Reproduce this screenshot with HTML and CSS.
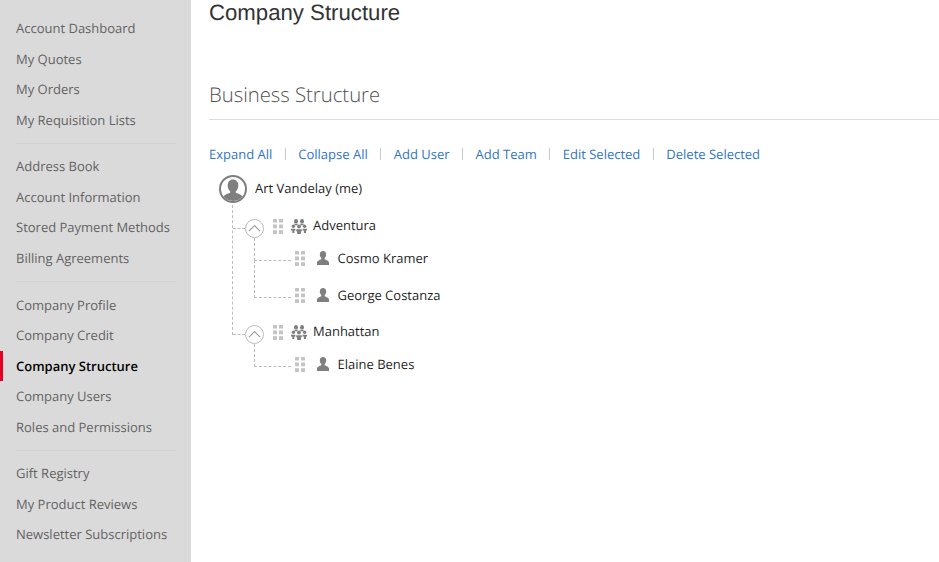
FILE: index.html
```html
<!DOCTYPE html>
<html lang="en">
<head>
<meta charset="utf-8">
<title>Company Structure</title>
<link rel="stylesheet" href="styles.css">
</head>
<body>
<svg class="defs" width="0" height="0" aria-hidden="true">
  <symbol id="grip" viewBox="0 0 10 15"><g fill="#c4c4c4"><rect x="0" y="0" width="4" height="3.500"/><rect x="6" y="0" width="4" height="3.500"/><rect x="0" y="5.500" width="4" height="3.800"/><rect x="6" y="5.500" width="4" height="3.800"/><rect x="0" y="11.200" width="4" height="3.800"/><rect x="6" y="11.200" width="4" height="3.800"/></g></symbol>
  <symbol id="user" viewBox="0 0 14 14"><path fill="#7f7f7f" d="M7 0C5 0 3.800 1.500 3.800 3.500c0 1.500.6 2.700 1.500 3.400v1.300C3.700 9 1 9.600 1 11.600V14h12v-2.400c0-2-2.700-2.600-4.300-3.400V6.900c.9-.7 1.500-1.900 1.500-3.400C10.200 1.500 9 0 7 0z"/></symbol>
  <symbol id="team" viewBox="0 0 16 15"><g fill="#7f7f7f"><ellipse cx="5" cy="2.200" rx="2" ry="2.200"/><ellipse cx="11" cy="2.200" rx="2" ry="2.200"/><path d="M3 4.800h4.100l-.9 1.500H3.900z"/><path d="M8.900 4.800H13l-.9 1.500H9.800z"/><ellipse cx="2.400" cy="7.300" rx="1.700" ry="1.700"/><ellipse cx="13.600" cy="7.300" rx="1.700" ry="1.700"/><ellipse cx="8" cy="7.600" rx="1.900" ry="2"/><path d="M0 9.800h4.400v1.700H3.400V14H1.300v-2.500H0z"/><path d="M11.600 9.800H16v1.700h-1V14h-2.100v-2.500h-1.300z"/><path d="M5.200 10.300h5.600v1.900H9.900V15H6.100v-2.800h-.9z"/></g></symbol>
</svg>
<div class="page">
  <nav class="sidebar">
    <ul class="nav-group">
      <li><a href="#">Account Dashboard</a></li>
      <li><a href="#">My Quotes</a></li>
      <li><a href="#">My Orders</a></li>
      <li><a href="#">My Requisition Lists</a></li>
    </ul>
    <ul class="nav-group">
      <li><a href="#">Address Book</a></li>
      <li><a href="#">Account Information</a></li>
      <li><a href="#">Stored Payment Methods</a></li>
      <li><a href="#">Billing Agreements</a></li>
    </ul>
    <ul class="nav-group">
      <li><a href="#">Company Profile</a></li>
      <li><a href="#">Company Credit</a></li>
      <li class="current"><a href="#">Company Structure</a></li>
      <li><a href="#">Company Users</a></li>
      <li><a href="#">Roles and Permissions</a></li>
    </ul>
    <ul class="nav-group">
      <li><a href="#">Gift Registry</a></li>
      <li><a href="#">My Product Reviews</a></li>
      <li><a href="#">Newsletter Subscriptions</a></li>
    </ul>
  </nav>
  <main class="content">
    <h1 class="page-title">Company Structure</h1>
    <h2 class="section-title">Business Structure</h2>
    <div class="actions">
      <a href="#">Expand All</a>
      <a href="#">Collapse All</a>
      <a href="#">Add User</a>
      <a href="#">Add Team</a>
      <a href="#">Edit Selected</a>
      <a href="#">Delete Selected</a>
    </div>
    <div class="tree">
      <div class="root">
        <span class="avatar"><svg viewBox="0 0 24 24" width="24" height="24"><path fill="#7f7f7f" d="M12 2.500C8.800 2.500 6.700 5 6.700 8.400c0 2.500 1 4.600 2.500 5.800v1.600c-2.600 1.200-6.300 2.100-7.600 4.500C4 23 7.800 24 12 24s8-1 10.400-3.700c-1.300-2.400-5-3.300-7.600-4.500v-1.600c1.500-1.200 2.500-3.300 2.500-5.800C17.300 5 15.200 2.500 12 2.500z"/></svg></span>
        <span class="name">Art Vandelay (me)</span>
      </div>
      <ul class="teams">
        <li class="team">
          <div class="team-row">
            <span class="toggle"><svg viewBox="0 0 20 20" width="15" height="15"><path d="M2.500 13.500L10 6l7.500 7.500" fill="none" stroke="#a0a0a0" stroke-width="1.600"/></svg></span>
            <svg class="grip" width="10" height="15"><use href="#grip"/></svg>
            <svg class="team-icon" width="16" height="15"><use href="#team"/></svg>
            <span class="name">Adventura</span>
          </div>
          <ul class="members">
            <li class="member"><svg class="grip" width="10" height="15"><use href="#grip"/></svg><svg class="user-icon" width="14" height="14"><use href="#user"/></svg><span class="name">Cosmo Kramer</span></li>
            <li class="member"><svg class="grip" width="10" height="15"><use href="#grip"/></svg><svg class="user-icon" width="14" height="14"><use href="#user"/></svg><span class="name">George Costanza</span></li>
          </ul>
        </li>
        <li class="team">
          <div class="team-row">
            <span class="toggle"><svg viewBox="0 0 20 20" width="15" height="15"><path d="M2.500 13.500L10 6l7.500 7.500" fill="none" stroke="#a0a0a0" stroke-width="1.600"/></svg></span>
            <svg class="grip" width="10" height="15"><use href="#grip"/></svg>
            <svg class="team-icon" width="16" height="15"><use href="#team"/></svg>
            <span class="name">Manhattan</span>
          </div>
          <ul class="members">
            <li class="member"><svg class="grip" width="10" height="15"><use href="#grip"/></svg><svg class="user-icon" width="14" height="14"><use href="#user"/></svg><span class="name">Elaine Benes</span></li>
          </ul>
        </li>
      </ul>
    </div>
  </main>
</div>
</body>
</html>
```

FILE: styles.css
```css
* { box-sizing: border-box; }
html, body { margin: 0; padding: 0; height: 100%; overflow: hidden; background: #fff; }
body { font-family: "Open Sans", "Noto Sans", sans-serif; font-size: 13px; color: #1f1f1f; text-rendering: geometricPrecision; }
ul { list-style: none; margin: 0; padding: 0; }
a { text-decoration: none; }
.defs { position: absolute; }
.page { display: flex; height: 562px; }

.sidebar { width: 191px; flex: none; background: #dadada; padding-top: 13px; }
.nav-group { padding-bottom: 8.500px; margin-bottom: 7.800px; position: relative; }
.nav-group:not(:last-child)::after { content: ""; position: absolute; left: 16px; right: 15px; bottom: 0; border-bottom: 1px solid #d2d2d2; }
.nav-group li { height: 30.500px; line-height: 30.500px; padding-left: 16px; }
.nav-group a { color: #636363; white-space: nowrap; }
.nav-group .current { box-shadow: inset 3px 0 0 #e60023; }
.nav-group .current a { color: #000; font-weight: 600; }

.content { flex: 1; padding-left: 18px; min-width: 0; }
.page-title { margin: 0; font: 400 22.200px/26px "Liberation Sans", Arial, sans-serif; color: #333; }
.section-title { margin: 54px 0 0; padding-bottom: 11px; font-weight: 300; font-size: 20.300px; line-height: 28px; color: #505050; border-bottom: 1px solid #dcdcdc; }
.actions { display: flex; margin-top: 24px; line-height: 20px; }
.actions a { color: #2f76c2; white-space: nowrap; padding-right: 13.500px; margin-right: 12.500px; position: relative; }
.actions a:not(:last-child)::after { content: ""; position: absolute; right: 0; top: 4px; height: 12px; width: 1px; background: #c9c9c9; }

.tree { margin-top: 10px; padding-left: 10px; }
.root { display: flex; align-items: center; height: 30px; }
.avatar { width: 28px; height: 28px; border: 2px solid #7f7f7f; border-radius: 50%; display: flex; align-items: flex-end; justify-content: center; overflow: hidden; background: #fff; }
.avatar svg { display: block; flex: none; }
.root .name { margin-left: 8px; margin-bottom: 2px; }
.name { color: #1f1f1f; white-space: nowrap; }

.teams { margin-left: 13px; margin-top: 1px; padding-top: 10px; height: 130px; border-left: 1px dashed #bdbdbd; }
.team-row { display: flex; align-items: center; height: 24px; padding-left: 12px; position: relative; }
.team-row::before { content: ""; position: absolute; left: 0; top: 13px; width: 12px; border-top: 1px dashed #bdbdbd; }
.toggle { width: 19px; height: 19px; border: 1.500px solid #bcbcbc; border-radius: 50%; display: flex; align-items: center; justify-content: center; margin-top: 2px; background: #fff; position: relative; z-index: 1; }
.team-row .grip { margin-left: 9px; margin-bottom: 1px; }
.team-row .team-icon { margin-left: 8px; margin-bottom: 1px; }
.team-row .name { margin-left: 6px; margin-bottom: 4px; }

.members { margin-left: 21px; padding-bottom: 8px; }
.member { display: flex; align-items: center; height: 37px; padding-left: 41px; position: relative; }
.member::before { content: ""; position: absolute; left: 0; bottom: 15px; width: 36px; height: 37px; border-left: 1px dashed #bdbdbd; border-bottom: 1px dashed #bdbdbd; }
.member .grip { margin-top: 1px; }
.member .user-icon { margin-left: 11px; margin-top: 1px; }
.member .name { margin-left: 7.500px; }
```
